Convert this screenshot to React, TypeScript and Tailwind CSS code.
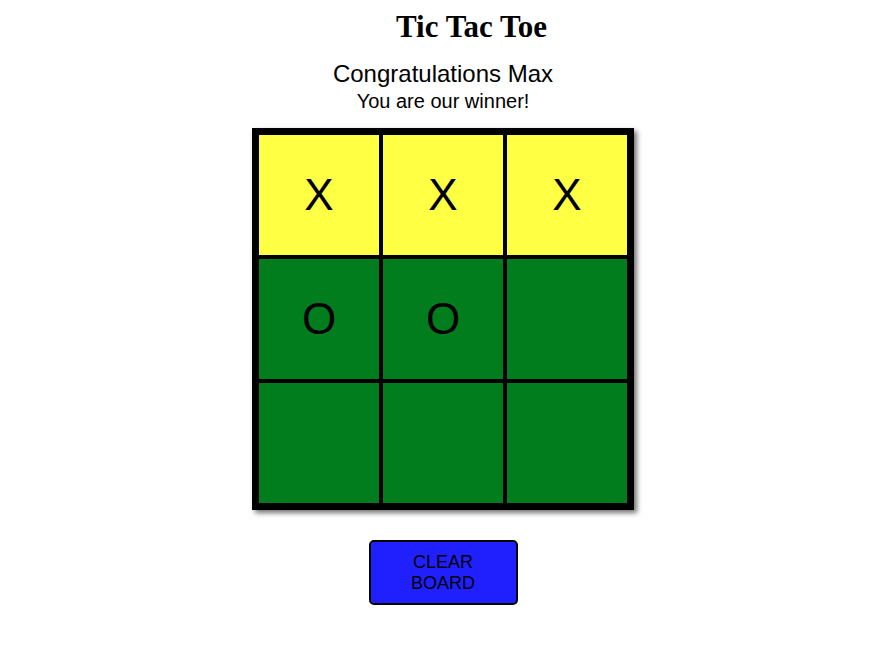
const board: string[] = ["X", "X", "X", "O", "O", "", "", "", ""];
const winLine = [0, 1, 2];

export default function App() {
    return (
        <div className="w-[886px] bg-white min-h-[648px] flex flex-col items-center font-['Liberation_Sans',Arial,sans-serif] text-black">
            <h1 className="ml-[57px] pt-[11px] text-[31px] leading-[31px] font-bold font-['Liberation_Serif','Times_New_Roman',serif]">
                Tic Tac Toe
            </h1>

            <div className="mt-[20px] text-[24px] leading-[23px]">Congratulations Max</div>
            <div className="mt-[6px] text-[20px] leading-[20px]">You are our winner!</div>

            {/* board */}
            <div className="mt-[17px] border-[5px] border-black grid grid-cols-3 shadow-[3px_3px_5px_rgba(0,0,0,0.55)]">
                {board.map((v, i) => (
                    <div
                        key={i}
                        className={
                            "w-[124px] h-[124px] border-2 border-black flex items-center justify-center text-[44px] leading-none " +
                            (winLine.includes(i) ? "bg-[#ffff44]" : "bg-[#017d1d]")
                        }
                    >
                        {v}
                    </div>
                ))}
            </div>

            <button className="mt-[30px] w-[149px] h-[65px] bg-[#2020ff] border-2 border-black rounded-[5px] text-[18px] leading-[21px] text-black text-center flex items-center justify-center">
                CLEAR<br />BOARD
            </button>
        </div>
    );
}
